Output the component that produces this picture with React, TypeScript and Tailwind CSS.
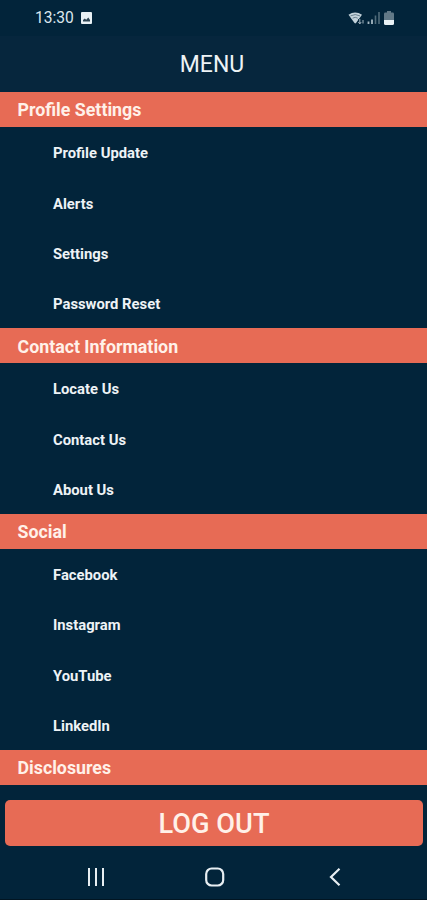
const sections = [
    { title: "Profile Settings", items: ["Profile Update", "Alerts", "Settings", "Password Reset"] },
    { title: "Contact Information", items: ["Locate Us", "Contact Us", "About Us"] },
    { title: "Social", items: ["Facebook", "Instagram", "YouTube", "LinkedIn"] },
    { title: "Disclosures", items: [] },
]

function StatusBar() {
    return <div className="flex h-9 shrink-0 items-center justify-between bg-[#02243a] pl-[35px] pr-[33px] text-[#dce8ee]">
        <div className="flex items-center gap-[7px]">
            <span className="pt-px text-[15.6px] leading-none">13:30</span>
            <svg width="11" height="12" viewBox="0 0 11 12">
                <rect width="11" height="12" rx="1" fill="#e8f0f4" />
                <path d="M2 9.5V8l1.8-1.6 1.4 1.4L7.3 5.4 9 8v1.5z" fill="#2d4453" />
            </svg>
        </div>
        <div className="flex items-center">
            <svg width="17" height="15" viewBox="0 0 17 15">
                <path d="M0.5 3.7Q7 -0.7 14 3.7L8 12Q7.2 12.8 6.5 12z" fill="#c3d2da" />
                <path d="M2.5 4.9Q7.2 2.2 12 4.9M4.6 7.2Q7.2 5.4 9.8 7.2" fill="none" stroke="#536b7a" strokeWidth="0.8" />
                <path d="M10.2 8h6v5.5h-6z" fill="#02243a" />
                <path d="M11.8 8v4.5M10.4 11l1.4 2 1.4-2M15 12.5V9" fill="none" stroke="#a3b6c1" strokeWidth="1" />
            </svg>
            <svg width="14" height="14" viewBox="0 0 14 14" className="ml-0.5">
                <path d="M1.5 10.5v2.5M5 8.5v4.5" stroke="#a5b8c2" strokeWidth="1.8" />
                <path d="M8.5 4.5V13M12 1v12" stroke="#506b7a" strokeWidth="1.6" />
            </svg>
            <svg width="10" height="14" viewBox="0 0 10 14" className="ml-[3px]">
                <path d="M3 0h4v1.6h1.7q1.3 0 1.3 1.3V9H0V2.9q0-1.3 1.3-1.3H3z" fill="#627987" />
                <path d="M0 9h10v3.5q0 1.5-1.5 1.5h-7Q0 14 0 12.5z" fill="#e9f1f5" />
            </svg>
        </div>
    </div>
}

function NavBar() {
    return <div className="flex h-[54.5px] shrink-0 items-center justify-between border-b border-[#011522] pl-[87px] pr-[86px] pt-[9px]">
        <svg width="18" height="20" viewBox="0 0 18 20" fill="none" stroke="#e8eef2" strokeWidth="2">
            <path d="M2 1v18M9 1v18M16 1v18" />
        </svg>
        <svg width="20" height="20" viewBox="0 0 20 20" fill="none" stroke="#e8eef2" strokeWidth="2.2" className="mr-1">
            <rect x="1.2" y="1.5" width="17" height="17" rx="5.5" />
        </svg>
        <svg width="12" height="20" viewBox="0 0 12 20" fill="none" stroke="#e8eef2" strokeWidth="2.2">
            <path d="M10.5 1.8 2 10l8.5 8.2" />
        </svg>
    </div>
}

export default function App() {
    return <div className="flex h-[900px] w-full flex-col overflow-hidden bg-[#02243a] font-[Roboto,sans-serif] text-[#eef3f6]">
        <StatusBar />
        <h1 className="flex h-[56.3px] shrink-0 items-center justify-center bg-[#06263d] pr-[3px] pt-0.5 text-[23px]">MENU</h1>
        <div className="min-h-0 flex-1">
            {sections.map(section => <section key={section.title}>
                <h2 className="flex h-[35px] items-center bg-[#e76b55] pl-[17.5px] pt-0.5 text-[17.8px] font-bold text-[#fff1e9]">{section.title}</h2>
                {section.items.map(item => <div key={item} className="flex h-[50.27px] items-center pl-[53px] pt-0.5 text-[14.8px] font-bold">{item}</div>)}
            </section>)}
        </div>
        <button className="mr-1 ml-[5px] flex h-[46px] shrink-0 items-center justify-center rounded-[5px] bg-[#e76b55] pt-[3px] text-[27.2px] font-medium text-[#fff1e9]">LOG OUT</button>
        <NavBar />
    </div>
}
